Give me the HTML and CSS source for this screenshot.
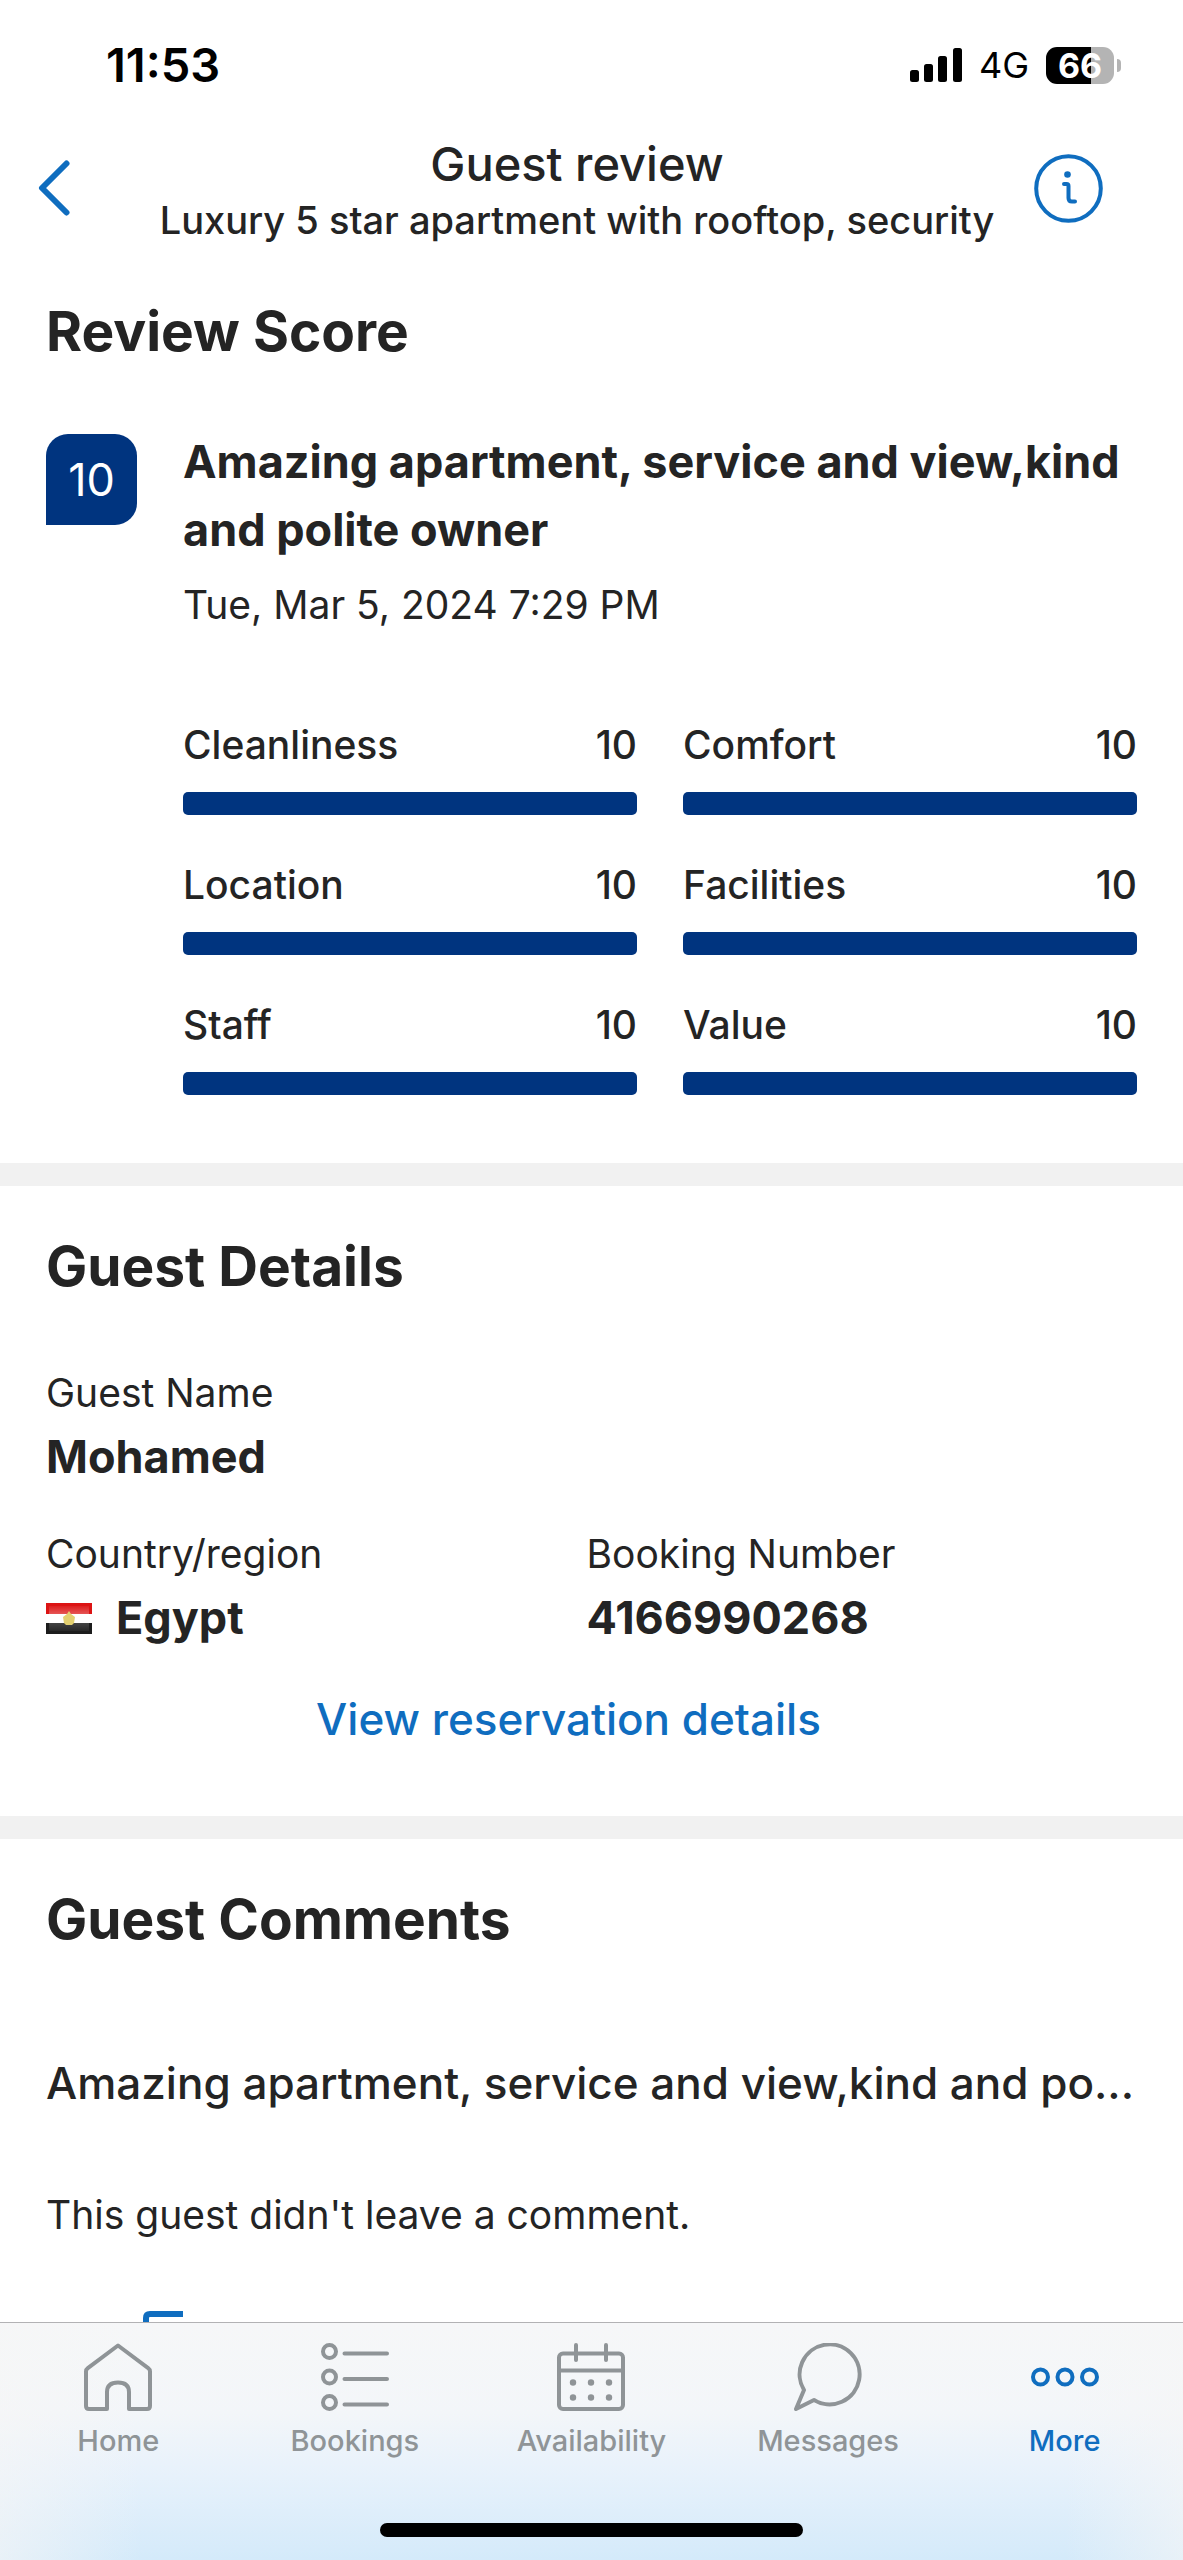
FILE: index.html
```html
<!DOCTYPE html>
<html lang="en">
<head>
  <meta charset="UTF-8" />
  <meta name="viewport" content="width=device-width, initial-scale=1.0"/>
  <title>Guest review</title>
  <link rel="stylesheet" href="styles.css">
</head>
<body>
  <div class="status-bar">
    <span class="time">11:53</span>
    <div class="status-icons">
      <svg class="signal" viewBox="0 0 52 34">
        <rect x="0" y="22" width="9" height="12" rx="2.5"/>
        <rect x="14" y="16" width="9" height="18" rx="2.5"/>
        <rect x="28" y="8" width="9" height="26" rx="2.5"/>
        <rect x="43" y="0" width="9" height="34" rx="2.5"/>
      </svg>
      <span class="network">4G</span>
      <div class="battery"><span class="battery-level">66</span></div>
    </div>
  </div>

  <header class="top-bar">
    <button class="back-btn" aria-label="Back">
      <svg viewBox="0 0 32 56"><path d="M28.500 3.500 4 28l24.500 24.500"/></svg>
    </button>
    <div class="titles">
      <h1>Guest review</h1>
      <p>Luxury 5 star apartment with rooftop, security</p>
    </div>
    <button class="info-btn" aria-label="Information">
      <svg viewBox="0 0 69 69">
        <circle cx="34.500" cy="34.500" r="32.300"/>
        <path d="M30 30h2.500q2 0 2 2v12q0 3.500 3.500 3.500h3"/>
        <circle class="dot" cx="33.500" cy="20.500" r="3.300"/>
      </svg>
    </button>
  </header>

  <main>
    <section>
      <h2>Review Score</h2>
      <div class="review">
        <div class="score-badge">10</div>
        <div class="review-body">
          <h3>Amazing apartment, service and view,kind and polite owner</h3>
          <p class="date">Tue, Mar 5, 2024 7:29 PM</p>
          <div class="scores">
            <div class="score"><span>Cleanliness</span><span>10</span><div class="bar"><div class="fill" style="width: 100%"></div></div></div>
            <div class="score"><span>Comfort</span><span>10</span><div class="bar"><div class="fill" style="width: 100%"></div></div></div>
            <div class="score"><span>Location</span><span>10</span><div class="bar"><div class="fill" style="width: 100%"></div></div></div>
            <div class="score"><span>Facilities</span><span>10</span><div class="bar"><div class="fill" style="width: 100%"></div></div></div>
            <div class="score"><span>Staff</span><span>10</span><div class="bar"><div class="fill" style="width: 100%"></div></div></div>
            <div class="score"><span>Value</span><span>10</span><div class="bar"><div class="fill" style="width: 100%"></div></div></div>
          </div>
        </div>
      </div>
    </section>

    <section>
      <h2>Guest Details</h2>
      <div class="details">
        <dl class="fields">
          <div class="wide">
            <dt>Guest Name</dt>
            <dd>Mohamed</dd>
          </div>
          <div>
            <dt>Country/region</dt>
            <dd>
              <svg class="flag" viewBox="0 0 46 31">
                <defs>
                  <linearGradient id="shine" x1="0" y1="0" x2="0" y2="1">
                    <stop offset="0" stop-color="#fff" stop-opacity="0.050"/>
                    <stop offset="0.350" stop-color="#fff" stop-opacity="0.300"/>
                    <stop offset="1" stop-color="#fff" stop-opacity="0.050"/>
                  </linearGradient>
                </defs>
                <rect width="46" height="31" fill="#fff"/>
                <rect width="46" height="11" fill="#dc1414"/>
                <rect y="20" width="46" height="11" fill="#1c1c1c"/>
                <rect x="3" y="3" width="40" height="25" fill="url(#shine)"/>
                <path d="M23 8l2 3 4 3-1 6-2 2h-6l-2-2-1-6 4-3z" fill="#e3d070"/>
              </svg>
              Egypt
            </dd>
          </div>
          <div>
            <dt>Booking Number</dt>
            <dd>4166990268</dd>
          </div>
        </dl>
        <a class="reservation-link" href="#reservation">View reservation details</a>
      </div>
    </section>

    <section>
      <h2>Guest Comments</h2>
      <p class="comment-title">Amazing apartment, service and view,kind and po...</p>
      <p class="comment-text">This guest didn't leave a comment.</p>
      <button class="reply-btn" aria-label="Reply">
        <svg viewBox="0 0 60 60"><path d="M40 3H7q-4 0-4 4v36M19 14h29q5 0 5 5v32q0 5-5 5H19q-5 0-5-5V19q0-5 5-5z"/></svg>
      </button>
    </section>
  </main>

  <nav class="tab-bar">
    <div class="tabs">
      <a href="#home">
        <svg viewBox="0 0 68 68"><path d="M34 2.500 3.800 25.200Q2 26.500 2 28.500V63q0 3 3 3h18V49q0-9.500 11-9.500T45 49v17h18q3 0 3-3V28.500q0-2-1.800-3.300z"/></svg>
        Home
      </a>
      <a href="#bookings">
        <svg viewBox="0 0 68 68">
          <circle cx="8.500" cy="8.500" r="6.500"/><circle cx="8.500" cy="34" r="6.500"/><circle cx="8.500" cy="59.500" r="6.500"/>
          <path d="M23.500 10.500H66M23.500 36H66M23.500 61.500H66"/>
        </svg>
        Bookings
      </a>
      <a href="#availability">
        <svg viewBox="0 0 68 68">
          <rect x="2" y="10.500" width="64" height="55.500" rx="4"/>
          <path d="M2 27.500h64M19 2v15M49 2v15"/>
          <g class="dot">
            <circle cx="16" cy="39.500" r="3.200"/><circle cx="34" cy="39.500" r="3.200"/><circle cx="52" cy="39.500" r="3.200"/>
            <circle cx="16" cy="54.500" r="3.200"/><circle cx="34" cy="54.500" r="3.200"/><circle cx="52" cy="54.500" r="3.200"/>
          </g>
        </svg>
        Availability
      </a>
      <a href="#messages">
        <svg viewBox="0 0 68 68"><path d="M10 47A30 30 0 1 1 20 57L2 66z"/></svg>
        Messages
      </a>
      <a class="active" href="#more">
        <svg viewBox="0 0 68 68"><circle cx="9.500" cy="34" r="7.500"/><circle cx="34" cy="34" r="7.500"/><circle cx="58.500" cy="34" r="7.500"/></svg>
        More
      </a>
    </div>
    <div class="home-indicator"></div>
  </nav>
</body>
</html>
```
FILE: styles.css
```css
:root {
  --text: #242424;
  --blue: #0f6dbf;
  --navy: #00347f;
  --grey: #8f9497;
  --gutter: 46px;
}
* {
  box-sizing: border-box;
}
body {
  font-family: Inter, "Liberation Sans", sans-serif;
  font-size: 39px;
  line-height: 60px;
  background: #fff;
  color: var(--text);
  margin: 0;
  height: 100vh;
  display: flex;
  flex-direction: column;
}
h1, h2, h3, p, dl, dd {
  margin: 0;
}
button {
  padding: 0;
  border: none;
  background: none;
  color: var(--blue);
  cursor: pointer;
}
a {
  color: var(--blue);
  text-decoration: none;
}
svg {
  display: block;
  flex: none;
  fill: none;
  stroke: currentColor;
  stroke-width: 4;
  stroke-linecap: round;
  stroke-linejoin: round;
}
.dot {
  fill: currentColor;
  stroke: none;
}

/* status bar */
.status-bar {
  height: 130px;
  padding: 0 69px 0 106px;
  display: flex;
  align-items: center;
  justify-content: space-between;
  color: #000;
}
.time {
  font-size: 47px;
  font-weight: 600;
}
.status-icons {
  display: flex;
  align-items: center;
  gap: 17px;
}
.signal {
  width: 52px;
  height: 34px;
  fill: #000;
  stroke: none;
}
.network { font-size: 36px; }
.battery {
  position: relative;
  width: 68px;
  height: 37px;
  border-radius: 11px;
  background: linear-gradient(90deg, #000 66%, #b4b4b4 66%);
  color: #fff;
  font-size: 34px;
  font-weight: 700;
  line-height: 37px;
  text-align: center;
}
.battery::after {
  content: "";
  position: absolute;
  right: -7px;
  top: 12px;
  width: 4px;
  height: 13px;
  border-radius: 0 4px 4px 0;
  background: #b4b4b4;
}

/* header */
.top-bar {
  display: flex;
  align-items: center;
  justify-content: space-between;
  padding: 2px 80px 9px 38px;
}
.back-btn { width: 82px; }
.back-btn svg {
  width: 32px;
  height: 56px;
  stroke-width: 6;
}
.info-btn svg {
  width: 69px;
  height: 69px;
}
.titles {
  text-align: center;
  white-space: nowrap;
}
.titles h1 {
  font-size: 47px;
  font-weight: 500;
  line-height: 64px;
}
.titles p {
  font-size: 38px;
  font-weight: 500;
  line-height: 48px;
}

/* sections */
main {
  flex: 1;
  min-height: 0;
  overflow: hidden;
}
section { padding: var(--gutter) var(--gutter) 63px; }
section + section {
  padding-top: 48px;
  border-top: 23px solid #f1f1f1;
}
h2 {
  font-size: 55px;
  font-weight: 700;
  line-height: 64px;
}
h3, dd {
  font-size: 45px;
  font-weight: 700;
  line-height: 68px;
}

/* review */
.review {
  display: flex;
  gap: var(--gutter);
  margin-top: 65px;
}
.score-badge {
  flex: none;
  width: 91px;
  height: 91px;
  margin-top: 6px;
  border-radius: 22px 22px 22px 0;
  background: var(--navy);
  color: #fff;
  font-size: 45px;
  line-height: 91px;
  text-align: center;
}
.review-body { flex: 1; }
.date { margin-top: 11px; }
.scores {
  display: grid;
  grid-template-columns: 1fr 1fr;
  gap: 40px var(--gutter);
  margin: 80px 0 5px;
  font-weight: 500;
}
.score {
  display: flex;
  flex-wrap: wrap;
  justify-content: space-between;
}
.bar {
  width: 100%;
  height: 23px;
  margin-top: 17px;
  border-radius: 5px;
  background: #e6e6e6;
  overflow: hidden;
}
.fill {
  height: 100%;
  background: var(--navy);
}

/* guest details */
.details {
  margin-top: 65px;
  padding-right: var(--gutter);
}
.fields {
  display: grid;
  grid-template-columns: 1fr 1fr;
  gap: 33px 36px;
}
.wide { grid-column: 1 / -1; }
dd {
  display: flex;
  align-items: center;
  gap: 24px;
}
.flag {
  width: 46px;
  height: 31px;
  stroke: none;
}
.reservation-link {
  display: block;
  margin-top: 33px;
  font-size: 44px;
  font-weight: 500;
  line-height: 68px;
  text-align: center;
}

/* comments */
.comment-title {
  margin-top: 98px;
  font-size: 44px;
  font-weight: 500;
  line-height: 68px;
  white-space: nowrap;
}
.comment-text { margin-top: 68px; }
.reply-btn {
  display: block;
  margin: 66px 0 0 97px;
}
.reply-btn svg {
  width: 60px;
  height: 60px;
  stroke-width: 6;
  stroke-linecap: butt;
}

/* bottom tabs */
.tab-bar {
  padding: 20px 0 23px;
  border-top: 1px solid #b2b2b4;
  background:
    linear-gradient(90deg, rgba(246, 246, 246, 0.6) 0%, rgba(246, 246, 246, 0) 12%, rgba(246, 246, 246, 0) 90%, rgba(246, 246, 246, 0.6) 100%),
    linear-gradient(#f6f7f8 0%, #f3f6f9 38%, #e9f2fb 60%, #d4eafa 100%);
}
.tabs { display: flex; }
.tabs a {
  flex: 1;
  display: flex;
  flex-direction: column;
  align-items: center;
  gap: 12px;
  color: var(--grey);
  font-size: 29px;
  font-weight: 500;
  line-height: 36px;
}
.tabs svg {
  width: 68px;
  height: 68px;
}
.tabs .active { color: var(--blue); }
.home-indicator {
  width: 423px;
  height: 14px;
  margin: 64px auto 0;
  border-radius: 7px;
  background: #000;
}
```
